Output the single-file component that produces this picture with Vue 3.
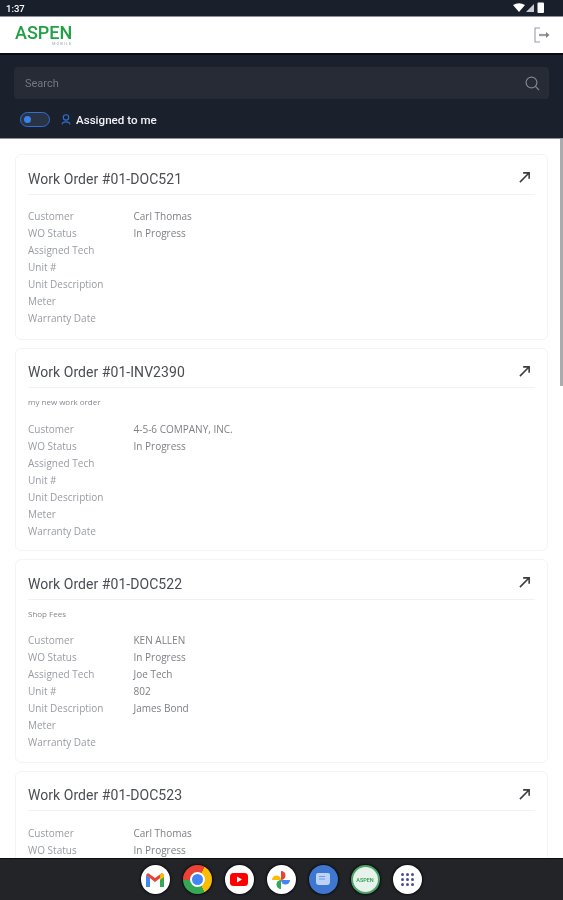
<script setup>
const orders = [
  { id: '01-DOC521', note: '', values: ['Carl Thomas', 'In Progress', '', '', '', '', ''] },
  { id: '01-INV2390', note: 'my new work order', values: ['4-5-6 COMPANY, INC.', 'In Progress', '', '', '', '', ''] },
  { id: '01-DOC522', note: 'Shop Fees', values: ['KEN ALLEN', 'In Progress', 'Joe Tech', '802', 'James Bond', '', ''] },
  { id: '01-DOC523', note: '', values: ['Carl Thomas', 'In Progress', '', '', '', '', ''] },
]
const labels = ['Customer', 'WO Status', 'Assigned Tech', 'Unit #', 'Unit Description', 'Meter', 'Warranty Date']
</script>

<template>
  <div class="screen">
    <div class="status">
      <span class="time">1:37</span>
      <svg class="sysicons" width="32" height="12" viewBox="0 0 32 12">
        <path d="M0 3 Q6 -0.5 12 3 L6 10 Z" fill="#fff" />
        <path d="M13 10 L21 2 V10 Z" fill="#c9ccd2" />
        <rect x="24.5" y="0.5" width="6.5" height="10.5" rx="1" fill="#fff" />
      </svg>
    </div>

    <header class="appbar">
      <div class="logo">
        <span class="logo-main">ASPEN</span>
        <span class="logo-sub">MOBILE</span>
      </div>
      <svg class="logout" width="16" height="16" viewBox="0 0 16 16" fill="none" stroke="#9a9da2" stroke-width="1.1">
        <path d="M6 1 H1 V15 H6" />
        <path d="M5 8 H12" stroke-width="2.2" />
        <path d="M12 5 L15.5 8 L12 11 Z" fill="#7d8288" stroke="none" />
      </svg>
    </header>

    <section class="filters">
      <div class="search">
        <span>Search</span>
        <svg width="15" height="15" viewBox="0 0 15 15" fill="none" stroke="#7f8590" stroke-width="1.2">
          <circle cx="6.5" cy="6.5" r="5.4" />
          <path d="M10.4 10.4 L14 14" />
        </svg>
      </div>
      <div class="assign">
        <span class="toggle"><i></i></span>
        <svg width="10" height="11" viewBox="0 0 10 11" fill="none" stroke="#2f6fd6" stroke-width="1.1">
          <circle cx="5" cy="3.4" r="2.7" />
          <path d="M1 10.5 C1.4 7 8.6 7 9 10.5" />
        </svg>
        <span class="assign-label">Assigned to me</span>
      </div>
    </section>

    <main class="list">
      <span class="scrollbar"></span>
      <article v-for="o in orders" :key="o.id" class="card">
        <div class="card-head">
          <h2>Work Order #{{ o.id }}</h2>
          <svg width="12" height="12" viewBox="0 0 13 13" fill="none" stroke="#3a3d42" stroke-width="1.7">
            <path d="M1 12 L10.5 2.5 M4.5 2 H11 V8.5" />
          </svg>
        </div>
        <p v-if="o.note" class="note">{{ o.note }}</p>
        <dl :class="{ noted: o.note }">
          <div v-for="(label, i) in labels" :key="label" class="row">
            <dt>{{ label }}</dt>
            <dd>{{ o.values[i] }}</dd>
          </div>
        </dl>
      </article>
    </main>

    <footer class="dock">
      <span class="app">
        <svg width="18" height="14" viewBox="0 0 18 14">
          <path d="M0 2 V14 H4 V5 Z" fill="#4285f4" />
          <path d="M14 5 V14 H18 V2 Z" fill="#34a853" />
          <path d="M0 2 L9 9 L18 2 L16 0 L9 5 L2 0 Z" fill="#ea4335" />
          <path d="M16 0 L18 2 V4 L14 7 V2 Z" fill="#fbbc04" />
        </svg>
      </span>
      <span class="app chrome"><i></i></span>
      <span class="app">
        <svg width="18" height="13" viewBox="0 0 18 13">
          <rect width="18" height="13" rx="3.5" fill="#f00" />
          <path d="M7 3.5 L12 6.5 L7 9.5 Z" fill="#fff" />
        </svg>
      </span>
      <span class="app">
        <svg width="20" height="20" viewBox="0 0 20 20">
          <path d="M10 10 H1 A4.5 4.5 0 0 1 10 10 Z" fill="#fbbc04" />
          <path d="M10 10 V1 A4.5 4.5 0 0 1 10 10 Z" fill="#ea4335" />
          <path d="M10 10 H19 A4.5 4.5 0 0 1 10 10 Z" fill="#4285f4" />
          <path d="M10 10 V19 A4.5 4.5 0 0 1 10 10 Z" fill="#34a853" />
        </svg>
      </span>
      <span class="app msgs">
        <svg width="14" height="13" viewBox="0 0 14 13">
          <path d="M2 0 H12 A2 2 0 0 1 14 2 V9 A3 3 0 0 1 11 12 H3 A3 3 0 0 1 0 9 V2 A2 2 0 0 1 2 0 Z" fill="#bcd3f7" />
          <path d="M3 3.5 H9 M3 6 H9" stroke="#6f9ae0" stroke-width="1" />
        </svg>
      </span>
      <span class="app aspen"><b>ASPEN</b></span>
      <span class="app dots">
        <i v-for="n in 9" :key="n"></i>
      </span>
    </footer>
  </div>
</template>

<style>
html, body { margin: 0; background: #1a1f2c; }
</style>

<style scoped>
.screen {
  width: 563px;
  height: 900px;
  display: flex;
  flex-direction: column;
  overflow: hidden;
  background: #1a1f2c;
  font-family: Roboto, "Liberation Sans", sans-serif;
  filter: blur(0.35px);
}
.status {
  height: 16px;
  flex: none;
  display: flex;
  align-items: center;
  justify-content: space-between;
  padding: 0 18px 0 6px;
  color: #fff;
  font-size: 9.5px;
  font-weight: 500;
}
.appbar {
  height: 36px;
  flex: none;
  display: flex;
  align-items: center;
  justify-content: space-between;
  padding: 0 13px 0 15px;
  background: #fff;
  border-top: 1px solid #8d9097;
  border-bottom: 2px solid #0a0c12;
  box-sizing: content-box;
}
.logo { display: flex; flex-direction: column; align-items: flex-end; }
.logo-main { color: #22a044; font-size: 18px; font-weight: 500; line-height: 18px; }
.logo-sub { color: #a3a3a3; font-size: 4px; letter-spacing: 1px; line-height: 4px; }
.filters {
  height: 83px;
  flex: none;
  box-sizing: border-box;
  padding: 12px 14px 0;
  background: #1a202c;
}
.search {
  height: 32px;
  display: flex;
  align-items: center;
  justify-content: space-between;
  padding: 0 9px 0 11px;
  border-radius: 4px;
  background: #262b36;
  color: #73787f;
  font-size: 11px;
}
.assign {
  display: flex;
  align-items: center;
  gap: 5px;
  margin: 13px 0 0 6px;
  color: #f2f3f5;
  font-size: 11.6px;
  font-weight: 500;
}
.toggle {
  width: 30px;
  height: 15px;
  box-sizing: border-box;
  display: flex;
  align-items: center;
  padding-left: 3px;
  border: 1.5px solid #2f6fd6;
  border-radius: 8px;
  background: #2a3342;
  margin-right: 6px;
}
.toggle i { width: 7px; height: 7px; border-radius: 50%; background: #3b82ea; }
.list {
  position: relative;
  flex: 1;
  min-height: 0;
  overflow: hidden;
  display: flex;
  flex-direction: column;
  gap: 8px;
  padding: 15px 15px 0;
  background: #fff;
  border-top: 1px solid #8d9097;
  box-sizing: border-box;
}
.scrollbar {
  position: absolute;
  top: 0;
  right: 0;
  width: 3px;
  height: 247px;
  background: #a9abad;
}
.card {
  flex: none;
  box-sizing: border-box;
  padding: 0 12px 12px 12px;
  border: 1px solid #f4f4f5;
  border-radius: 6px;
  background: #fff;
}
.card-head {
  height: 39.5px;
  display: flex;
  align-items: center;
  justify-content: space-between;
  padding-top: 9px;
  box-sizing: border-box;
  border-bottom: 1px solid #f1f1f2;
}
.card-head svg { margin: -3px 4px 0 0; }
h2 {
  margin: 0;
  color: #4a4d52;
  font-size: 14px;
  font-weight: 400;
  letter-spacing: .05px;
}
.note {
  margin: 0;
  height: 25px;
  padding-top: 8px;
  box-sizing: border-box;
  color: #84878c;
  font-family: "Open Sans", sans-serif;
  font-size: 8px;
  line-height: 12px;
}
dl { margin: 13px 0 0; }
dl.noted { margin: 7px 0 -1px; }
.row { height: 17px; display: flex; align-items: center; }
dt { width: 105.5px; color: #989ca2; font-family: "Open Sans", sans-serif; font-size: 10px; }
dd { margin: 0; color: #7d8085; font-family: "Open Sans", sans-serif; font-size: 10px; }
.dock {
  height: 42px;
  flex: none;
  display: flex;
  align-items: center;
  justify-content: center;
  gap: 13px;
  padding-right: 1px;
  background: #232428;
  border-top: 1px solid #0b0c0f;
  box-sizing: border-box;
}
.app {
  width: 29px;
  height: 29px;
  display: flex;
  align-items: center;
  justify-content: center;
  border-radius: 50%;
  background: #fff;
  box-shadow: 0 0 2px 1px #0c0d10;
}
.chrome {
  background: conic-gradient(from 30deg, #fbbc04 0 120deg, #34a853 120deg 240deg, #ea4335 240deg 360deg);
}
.chrome i {
  width: 11px;
  height: 11px;
  border: 2px solid #fff;
  border-radius: 50%;
  background: #4285f4;
}
.msgs { background: #3f76d0; }
.aspen { background: #e7f3ea; border: 2px solid #4da468; box-sizing: border-box; }
.aspen b { color: #2c9a4e; font-size: 5.5px; font-weight: 500; }
.dots {
  display: grid;
  grid-template-columns: repeat(3, 3px);
  gap: 2px;
  align-content: center;
  justify-content: center;
}
.dots i { width: 3px; height: 3px; border-radius: 50%; background: #4a4f8f; }
</style>
